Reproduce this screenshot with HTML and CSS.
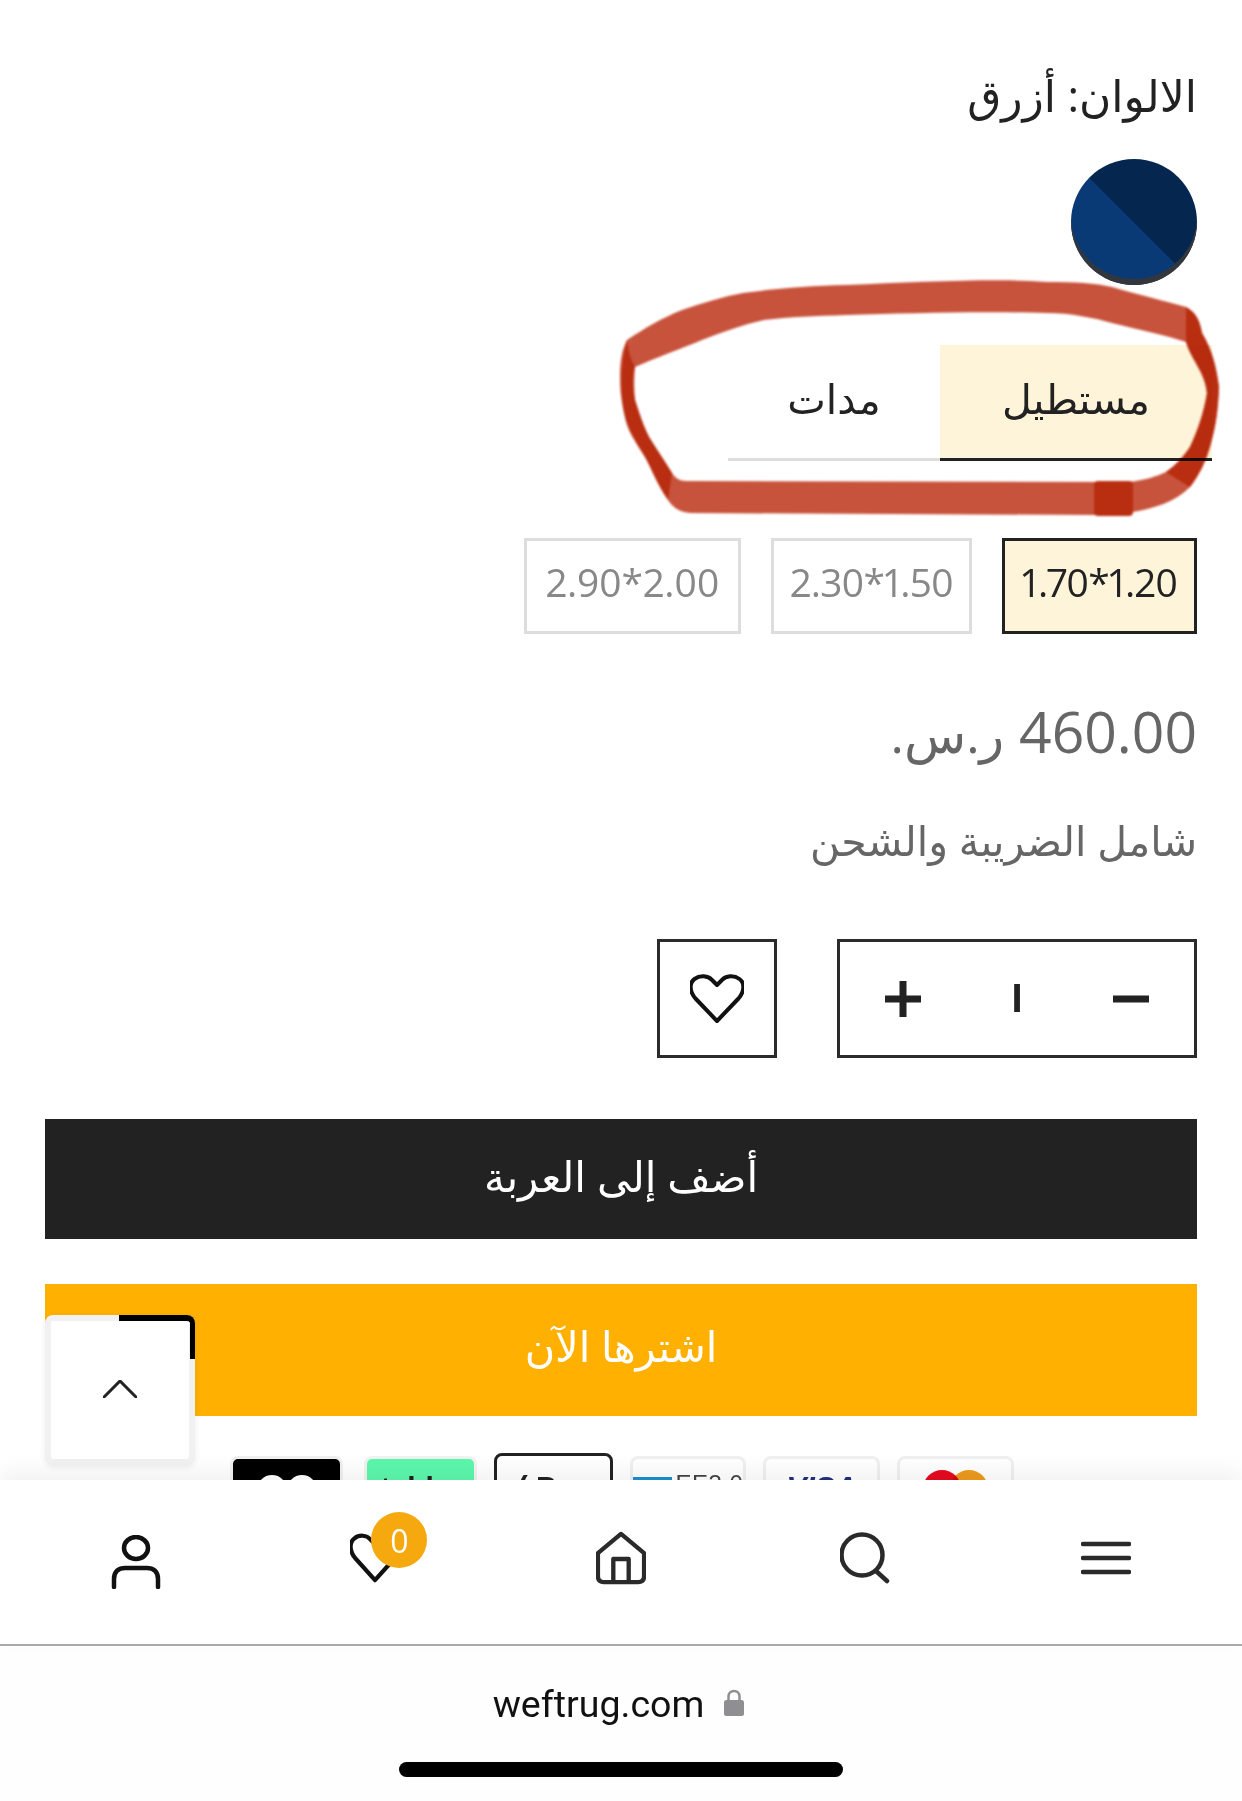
FILE: index.html
```html
<!DOCTYPE html>
<html lang="ar" dir="rtl">
<head>
<meta charset="utf-8">
<title>weftrug</title>
<link rel="stylesheet" href="styles.css">
</head>
<body>
<div class="page">
  <main class="product">
    <h2 class="color-title">الالوان: أزرق</h2>
    <div class="swatch"></div>
    <div class="tabs">
      <div class="tab tab-active">مستطيل</div>
      <div class="tab">مدات</div>
    </div>
    <div class="sizes">
      <div class="size size-a size-active">1.70*1.20</div>
      <div class="size size-b">2.30*1.50</div>
      <div class="size size-c">2.90*2.00</div>
    </div>
    <div class="price">460.00 <span class="currency">ر.س.</span></div>
    <div class="tax">شامل الضريبة والشحن</div>
    <div class="actions">
      <div class="qty">
        <svg class="qty-icon" viewBox="0 0 36 36"><path d="M0 18H36" /></svg>
        <span class="qty-num" aria-label="1">I</span>
        <svg class="qty-icon" viewBox="0 0 36 36"><path d="M0 18H36M18 0V36" /></svg>
      </div>
      <div class="wish">
        <svg class="wish-icon" viewBox="0 0 54 50"><path d="M27 47 5.500 24.500C-1 17-.5 8.500 4.500 5 10 1 18 1.500 22 6L27 11 32 6C36 1.500 44 1 49.500 5 54.500 8.500 55 17 48.500 24.500Z"/></svg>
      </div>
    </div>
    <button class="btn btn-dark"><span class="btn-label">أضف إلى العربة</span></button>
    <button class="btn btn-amber"><span class="btn-label">اشترها الآن</span></button>
    <div class="pay" dir="ltr">
      <div class="card card-black"><i class="dot"></i><i class="dot"></i></div>
      <div class="card card-green">tabby</div>
      <div class="card card-apple">( Pay</div>
      <div class="card card-amex"><i class="amex-box"></i><span>EE3 0</span></div>
      <div class="card card-visa">VISA</div>
      <div class="card card-mc"><i class="mc mc-red"></i><i class="mc mc-orange"></i></div>
    </div>
    <a class="to-top"><svg class="to-top-icon" viewBox="0 0 34 18"><path d="M1 17 17 1 33 17"/></svg></a>
    <svg class="scribble" viewBox="0 0 1242 620">
      <path class="scribble-fill" fill-rule="evenodd" d="M846 285C920 282 1000 278 1047 282 1075 282 1095 283 1112 287 1140 295 1165 301 1186 307 1197 313 1200 322 1202 333 1212 350 1216 365 1219 387 1218 410 1216 425 1211 443 1206 462 1199 475 1190 487 1175 502 1155 508 1133 512L1096 515 690 513C680 512 673 508 668 500 660 484 653 470 645 457 634 440 627 430 625 417 621 400 620 390 620 377 620 360 622 350 627 340 645 328 662 318 682 310 702 303 722 297 743 293 780 288 810 286 846 285ZM846 315C815 316 790 317 764 320 742 325 722 332 702 340 680 349 655 358 635 367 634 380 634 390 635 400 640 415 643 425 649 437 657 450 664 460 672 473 675 478 680 481 686 481L1129 482C1145 480 1155 477 1166 472 1176 465 1184 456 1190 447 1198 430 1204 412 1207 393 1205 372 1194 358 1186 342 1165 335 1140 330 1112 323 1095 318 1070 313 1047 313 980 311 910 313 846 315Z"/>
      <path class="scribble-dark" d="M627 340C620 365 620 395 625 417 630 432 640 448 645 457 652 470 658 486 668 500L672 473C664 460 657 450 649 437 643 425 640 415 635 400 632 385 632 375 635 367 630 358 628 350 627 340ZM1186 307C1197 313 1200 322 1202 333 1212 350 1216 365 1219 387 1218 410 1216 425 1211 443 1206 462 1199 475 1190 487L1166 472C1176 465 1184 456 1190 447 1198 430 1204 412 1207 393 1205 372 1190 358 1186 342Z"/>
      <rect class="scribble-dark" x="1094" y="481" width="39" height="35" rx="4"/>
    </svg>
  </main>
  <nav class="bottom-nav" dir="ltr">
    <a class="nav-item nav-person">
      <svg class="nav-svg" viewBox="0 0 50 54"><ellipse cx="25" cy="13" rx="12" ry="11"/><path d="M3 52V44C3 36 8 33 14 33H36C42 33 47 36 47 44V52"/></svg>
    </a>
    <a class="nav-item nav-wish">
      <svg class="nav-svg" viewBox="0 0 54 54"><path d="M27 51 5.500 27C-1 19-.5 10 4.500 6 10 1.500 18 2 22 7L27 12 32 7C36 2 44 1.500 49.500 6 54.500 10 55 19 48.500 27Z"/></svg>
      <span class="badge">0</span>
    </a>
    <a class="nav-item">
      <svg class="nav-svg nav-dark" viewBox="0 0 52 54"><path d="M2 22 26 2 50 22V46C50 50 48 52 44 52H8C4 52 2 50 2 46ZM18 52V28H34V52"/></svg>
    </a>
    <a class="nav-item nav-search">
      <svg class="nav-svg nav-dark" viewBox="0 0 50 50"><ellipse cx="22" cy="22" rx="20.500" ry="20.500"/><path d="M36 38 47 48"/></svg>
    </a>
    <a class="nav-item">
      <svg class="nav-svg nav-dark" viewBox="0 0 50 34"><path d="M2 3H48M2 17H48M2 31H48"/></svg>
    </a>
  </nav>
  <footer class="browser" dir="ltr">
    <div class="url"><span>weftrug.com</span>
      <svg class="lock" viewBox="0 0 20 27"><path class="lock-shackle" d="M4.500 12V7.500C4.500 4 7 2 10 2S15.500 4 15.500 7.500V12"/><rect class="lock-body" x="0" y="11" width="20" height="16" rx="2.500"/></svg>
    </div>
    <div class="home-bar"></div>
  </footer>
</div>
</body>
</html>
```
FILE: styles.css
```css
* { box-sizing: border-box; }
html, body { margin: 0; padding: 0; background: #fff; }
.page {
  width: 1242px;
  height: 1801px;
  overflow: hidden;
  display: flex;
  flex-direction: column;
  font-family: "Open Sans", "DejaVu Sans", sans-serif;
}
.product {
  position: relative;
  height: 1480px;
  flex: none;
  padding: 0 45px;
  overflow: hidden;
}
.color-title {
  margin: 0;
  padding-top: 65px;
  height: 159px;
  font-size: 44px;
  line-height: 60px;
  font-weight: 400;
  color: #222;
}
.swatch {
  width: 126px;
  height: 126px;
  border-radius: 50%;
  background: linear-gradient(45deg, #0a3a75 50%, #04264f 50%);
  box-shadow: inset 0 -6px 0 #33373b;
}
.tabs {
  display: flex;
  margin: 60px -15px 0 0;
  height: 116px;
}
.tab {
  display: flex;
  align-items: center;
  justify-content: center;
  width: 212px;
  padding-bottom: 8px;
  border-bottom: 3px solid #ddd;
  font-size: 41px;
  color: #222;
}
.tab-active {
  width: 272px;
  background: #fdf4d9;
  border-bottom-color: #222;
}
.sizes {
  display: flex;
  gap: 30px;
  margin-top: 77px;
}
.size {
  direction: ltr;
  height: 96px;
  padding: 0 0 9px;
  border: 3px solid #ddd;
  display: flex;
  align-items: center;
  justify-content: center;
  font-size: 39px;
  letter-spacing: -.800px;
  font-variant-numeric: proportional-nums;
  color: #888;
}
.size-a { width: 195px; }
.size-b { width: 201px; }
.size-c { width: 217px; letter-spacing: -.200px; }
.size-active {
  background: #fdf4d9;
  border-color: #222;
  color: #222;
}
.price {
  margin-top: 62px;
  height: 70px;
  line-height: 70px;
  font-size: 57px;
  color: #666;
}
.currency { font-size: 51px; }
.tax {
  margin-top: 49px;
  height: 50px;
  line-height: 50px;
  font-size: 41px;
  color: #666;
}
.actions {
  display: flex;
  gap: 60px;
  margin-top: 74px;
  height: 119px;
}
.qty {
  width: 360px;
  border: 3px solid #2b2b2b;
  display: flex;
  align-items: center;
  justify-content: space-between;
  padding: 0 45px;
}
.qty-icon { width: 36px; height: 36px; fill: none; stroke: #222; stroke-width: 7; }
.qty-num { font-family: "Liberation Sans", sans-serif; font-size: 40px; font-weight: 700; color: #222; }
.wish {
  width: 120px;
  border: 3px solid #2b2b2b;
  display: flex;
  align-items: center;
  justify-content: center;
}
.wish-icon { width: 54px; height: 50px; fill: none; stroke: #111; stroke-width: 4; stroke-linejoin: round; }
.btn {
  display: block;
  width: 100%;
  border: 0;
  color: #fff;
  font-family: inherit;
  padding: 0 0 8px;
}
.btn-dark { height: 120px; margin-top: 61px; background: #222; font-size: 42px; }
.btn-amber { height: 132px; margin-top: 45px; background: #ffb000; font-size: 41.500px; }
.pay {
  display: flex;
  justify-content: flex-start;
  gap: 17px;
  margin: 40px 183px 0 0;
  width: 784px;
}
.card {
  width: 113px;
  height: 80px;
  border: 3px solid #f0f0f0;
  border-radius: 8px;
  background: #fff;
  font-family: "Liberation Sans", sans-serif;
  font-weight: 700;
  font-size: 30px;
  line-height: 36px;
  overflow: hidden;
  flex: none;
  display: flex;
  justify-content: center;
  padding-top: 10px;
}
.card-black { background: #000; padding-top: 16px; margin-right: 4px; }
.dot { width: 30px; height: 30px; border-radius: 50%; background: #fff; }
.card-green { background: #5cf7ac; color: #222; border-color: #f2f2f2; padding-top: 11px; }
.card-apple { border-color: #222; color: #222; margin-top: -3px; width: 119px; padding-top: 13px; }
.card-amex { width: 116px; gap: 4px; color: #444; font-weight: 400; font-size: 24px; padding-top: 18px; white-space: nowrap; }
.amex-box { width: 39px; height: 30px; background: #1b8fd1; flex: none; }
.card-amex span { line-height: 26px; margin-top: -6px; letter-spacing: .500px; }
.card-visa { width: 117px; color: #23307e; font-style: italic; }
.card-mc { width: 117px; padding-top: 11px; }
.mc { width: 38px; height: 38px; border-radius: 50%; flex: none; }
.mc-red { background: #e60a1f; }
.mc-orange { background: #ee9a1d; margin-left: -11px; mix-blend-mode: multiply; }
.to-top {
  position: absolute;
  left: 45px;
  top: 1315px;
  width: 150px;
  height: 150px;
  background: #fff;
  border: 6px solid #f1f1f1;
  border-radius: 8px;
  box-shadow: 0 2px 6px rgba(0,0,0,.08);
  display: flex;
  align-items: center;
  justify-content: center;
}
.to-top::before {
  content: "";
  position: absolute;
  right: -6px;
  top: -6px;
  width: 71px;
  height: 38px;
  border-top: 6px solid #000;
  border-right: 5px solid #000;
  border-top-right-radius: 8px;
}
.to-top-icon { width: 34px; height: 18px; margin-bottom: 2px; fill: none; stroke: #222; stroke-width: 3; stroke-linecap: round; }
.scribble {
  position: absolute;
  left: 0;
  top: 0;
  width: 1242px;
  height: 620px;
  pointer-events: none;
  filter: blur(1.200px);
  mix-blend-mode: multiply;
}
.scribble-fill { fill: #c8533c; }
.scribble-dark { fill: #b92d10; }
.bottom-nav {
  flex: none;
  height: 166px;
  padding: 0 15px;
  background: #fff;
  border-bottom: 2px solid #aaa;
  box-shadow: 0 -10px 20px rgba(0,0,0,.05);
  display: grid;
  grid-template-columns: repeat(5, 1fr);
  position: relative;
}
.nav-item {
  display: flex;
  align-items: center;
  justify-content: center;
  position: relative;
  padding-bottom: 8px;
}
.nav-person { padding-bottom: 0; }
.nav-wish { padding-right: 8px; }
.nav-search { padding-left: 3px; }
.nav-svg { width: 50px; height: 54px; fill: none; stroke: #111; stroke-width: 4.500; stroke-linecap: round; stroke-linejoin: round; }
.nav-dark { stroke: #2a2a2a; }
.badge {
  position: absolute;
  left: 114px;
  top: 32px;
  width: 56px;
  height: 56px;
  border-radius: 50%;
  background: #f5a90f;
  color: #fff;
  font-size: 32px;
  display: flex;
  align-items: center;
  justify-content: center;
}
.browser {
  flex: 1;
  background: #fefefe;
  display: flex;
  flex-direction: column;
  align-items: center;
}
.url {
  display: flex;
  align-items: center;
  gap: 20px;
  margin-top: 34px;
  padding-right: 5px;
  height: 48px;
  font-family: Roboto, sans-serif;
  font-size: 37.500px;
  color: #111;
}
.lock { width: 20px; height: 27px; margin-top: -4px; }
.lock-shackle { fill: none; stroke: #8e8e93; stroke-width: 2.500; }
.lock-body { fill: #8e8e93; }
.home-bar {
  width: 444px;
  height: 15px;
  border-radius: 8px;
  background: #000;
  margin-top: 34px;
}
```
